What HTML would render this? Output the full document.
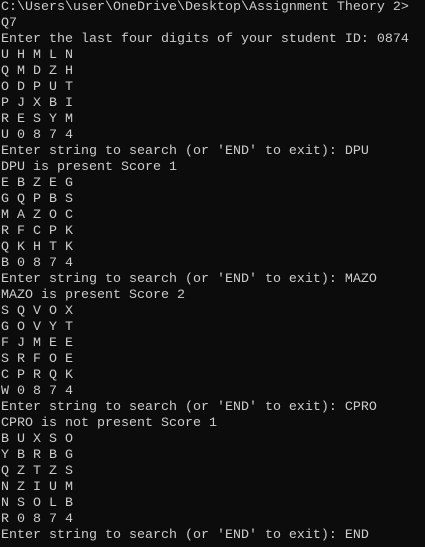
<!DOCTYPE html>
<html><head><style>
html,body{margin:0;padding:0;background:#0c0c0c;width:425px;height:547px;overflow:hidden}
pre{margin:0;padding:0 0 0 1px;font-family:"Liberation Mono",monospace;font-size:13.33px;line-height:16px;color:#cccccc;white-space:pre}
</style></head><body><pre>C:\Users\user\OneDrive\Desktop\Assignment Theory 2&gt;
Q7
Enter the last four digits of your student ID: 0874
U H M L N
Q M D Z H
O D P U T
P J X B I
R E S Y M
U 0 8 7 4
Enter string to search (or 'END' to exit): DPU
DPU is present Score 1
E B Z E G
G Q P B S
M A Z O C
R F C P K
Q K H T K
B 0 8 7 4
Enter string to search (or 'END' to exit): MAZO
MAZO is present Score 2
S Q V O X
G O V Y T
F J M E E
S R F O E
C P R Q K
W 0 8 7 4
Enter string to search (or 'END' to exit): CPRO
CPRO is not present Score 1
B U X S O
Y B R B G
Q Z T Z S
N Z I U M
N S O L B
R 0 8 7 4
Enter string to search (or 'END' to exit): END</pre></body></html>
